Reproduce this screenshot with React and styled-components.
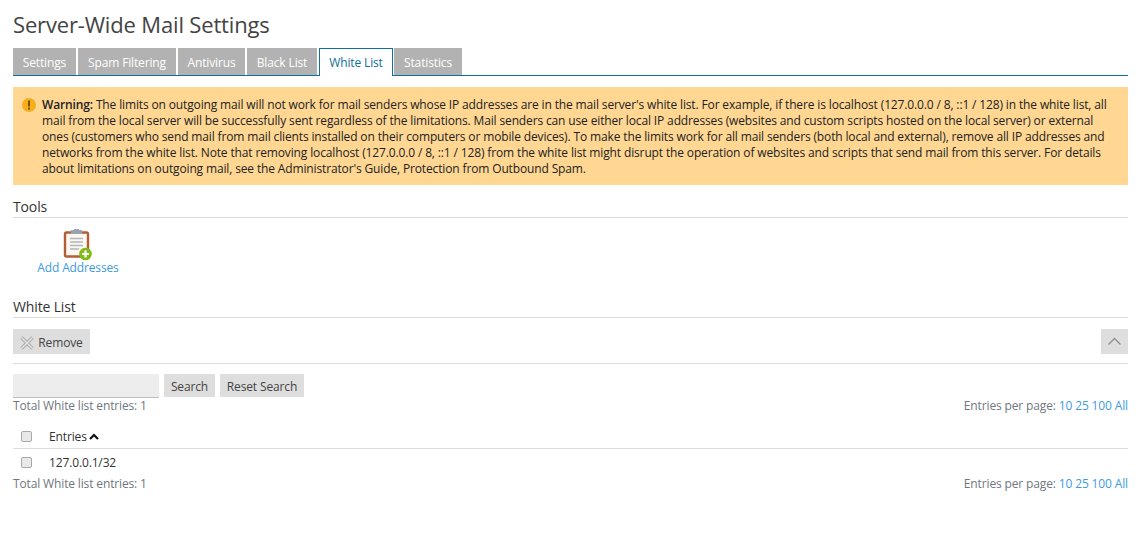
import React from "react";
import styled, { createGlobalStyle } from "styled-components";

const Global = createGlobalStyle`
  html, body { margin: 0; padding: 0; background: #fff; }
  body { font-family: "Open Sans", "Liberation Sans", sans-serif; font-size: 12px; letter-spacing: -0.14px; color: #222; }
`;
const Page = styled.div`
  padding: 0 19px 0 13px;
`;
const Title = styled.h1`
  margin: 0;
  padding-top: 9px;
  height: 48px;
  box-sizing: border-box;
  font-size: 22px;
  line-height: 30px;
  font-weight: 400;
  letter-spacing: -0.16px;
  color: #444;
`;
const Tabs = styled.div`
  display: flex;
  height: 28px;
  box-sizing: border-box;
  border-bottom: 1px solid #0f6f9c;
`;
const Tab = styled.div`
  box-sizing: border-box;
  height: ${p => (p.$active ? "28px" : "27px")};
  width: ${p => p.$w}px;
  margin-right: ${p => (p.$active ? 1 : 2)}px;
  text-align: center;
  line-height: 29px;
  white-space: nowrap;
  background: ${p => (p.$active ? "#fff" : "#b2b2b2")};
  color: ${p => (p.$active ? "#0f6f9c" : "#fff")};
  ${p => p.$active && "border: 1px solid #0f6f9c; border-bottom: none; line-height: 27px;"}
`;
const Warning = styled.div`
  margin-top: 11px;
  height: 98px;
  box-sizing: border-box;
  background: #ffd793;
  padding: 10px 10px 0 29px;
  line-height: 16px;
  color: #222;
  position: relative;
  strong { font-weight: 600; }
`;
const WarnIcon = styled.svg`
  position: absolute;
  left: 9px;
  top: 11px;
`;
const Section = styled.div`
  font-size: 14px;
  line-height: 20px;
  height: 20px;
  color: #333;
  border-bottom: 1px solid #ddd;
  margin-top: ${p => p.$mt}px;
`;
const ToolBox = styled.a`
  display: flex;
  flex-direction: column;
  align-items: center;
  width: 130px;
  margin-top: 11px;
  line-height: 16px;
  color: #3d9be0;
  svg { display: block; margin: 0 3px -1px 0; }
`;
const ActionBar = styled.div`
  display: flex;
  justify-content: space-between;
  margin-top: 11px;
  height: 34px;
  border-bottom: 1px solid #ddd;
`;
const Grey = styled.button`
  font: inherit;
  letter-spacing: inherit;
  border: 0;
  background: #dedede;
  color: #444;
  height: ${p => p.$h || 25}px;
  width: ${p => p.$w}px;
  padding: ${p => p.$pt ?? 2}px 0 0;
  display: flex;
  align-items: center;
  justify-content: center;
  gap: 4px;
  white-space: nowrap;
`;
const SearchRow = styled.div`
  display: flex;
  margin-top: 10px;
  gap: 5px;
`;
const SearchInput = styled.div`
  width: 146px;
  height: 23px;
  background: #ededed;
  border-bottom: 1px solid #b9c0c6;
`;
const Meta = styled.div`
  display: flex;
  justify-content: space-between;
  color: #6f7780;
  line-height: 16px;
`;
const Links = styled.span`
  color: #3d9be0;
`;
const Row = styled.div`
  display: flex;
  align-items: center;
  height: ${p => p.$h}px;
  padding-top: ${p => p.$pt || 0}px;
  padding-left: 8px;
  color: #333;
  ${p => p.$line && "border-bottom: 1px solid #ddd;"}
`;
const Check = styled.span`
  width: 11px;
  height: 11px;
  box-sizing: border-box;
  border: 1px solid #a8a8a8;
  border-radius: 2px;
  background: #e9e9e9;
  margin-right: 17px;
`;
const Caret = styled.svg`
  margin-left: 2px;
`;

const PerPage = () => (
  <span>Entries per page: <Links>10 25 100 All</Links></span>
);

export default function App() {
  return (
    <Page>
      <Global />
      <Title>Server-Wide Mail Settings</Title>
      <Tabs>
        <Tab $w={63}>Settings</Tab>
        <Tab $w={98}>Spam Filtering</Tab>
        <Tab $w={67}>Antivirus</Tab>
        <Tab $w={70}>Black List</Tab>
        <Tab $w={74} $active>White List</Tab>
        <Tab $w={68}>Statistics</Tab>
      </Tabs>
      <Warning>
        <WarnIcon width="14" height="14" viewBox="0 0 14 14">
          <circle cx="7" cy="7" r="7" fill="#f6ae1c" />
          <rect x="6" y="2.5" width="2" height="6" fill="#7a5200" />
          <rect x="6" y="9.6" width="2" height="2" fill="#7a5200" />
        </WarnIcon>
        <strong>Warning:</strong> The limits on outgoing mail will not work for mail senders whose IP addresses are in the mail server's white list. For example, if there is localhost (127.0.0.0 / 8, ::1 / 128) in the white list, all mail from the local server will be successfully sent regardless of the limitations. Mail senders can use either local IP addresses (websites and custom scripts hosted on the local server) or external ones (customers who send mail from mail clients installed on their computers or mobile devices). To make the limits work for all mail senders (both local and external), remove all IP addresses and networks from the white list. Note that removing localhost (127.0.0.0 / 8, ::1 / 128) from the white list might disrupt the operation of websites and scripts that send mail from this server. For details about limitations on outgoing mail, see the Administrator's Guide, Protection from Outbound Spam.
      </Warning>
      <Section $mt={12}>Tools</Section>
      <ToolBox>
        <svg width="32" height="32" viewBox="0 0 32 32">
          <rect x="4" y="3.5" width="23" height="24" rx="1.5" fill="#fbf7f2" stroke="#b35f36" strokeWidth="2.4" />
          <rect x="10" y="1" width="11" height="4" fill="#9aa4aa" />
          <rect x="13" y="0" width="5" height="2" fill="#9aa4aa" />
          <path d="M9 9.5h13M9 13h13M9 16.5h13M9 20h9" stroke="#b3b8bb" strokeWidth="1.3" />
          <circle cx="24.5" cy="25" r="6.3" fill="#7fbc16" />
          <path d="M24.5 21.5v7M21 25h7" stroke="#fff" strokeWidth="2.2" />
        </svg>
        Add Addresses
      </ToolBox>
      <Section $mt={21}>White List</Section>
      <ActionBar>
        <Grey $w={77}>
          <svg width="14" height="14" viewBox="0 0 14 14">
            <path d="M1.5 1.5l11 11M12.5 1.5l-11 11" stroke="#a9a9a9" strokeWidth="3.2" />
            <path d="M1.5 1.5l11 11M12.5 1.5l-11 11" stroke="#e6e6e6" strokeWidth="1.4" />
          </svg>
          Remove
        </Grey>
        <Grey $w={27} $pt={0}>
          <svg width="15" height="9" viewBox="0 0 15 9">
            <path d="M1.5 7.5L7.5 1.5l6 6" fill="none" stroke="#8f8f8f" strokeWidth="1.3" />
          </svg>
        </Grey>
      </ActionBar>
      <SearchRow>
        <SearchInput />
        <Grey $h={23} $w={51}>Search</Grey>
        <Grey $h={23} $w={84}>Reset Search</Grey>
      </SearchRow>
      <Meta>
        <span>Total White list entries: 1</span>
        <PerPage />
      </Meta>
      <Row $h={24} $pt={10} $line>
        <Check />
        Entries
        <Caret width="10" height="7" viewBox="0 0 10 7">
          <path d="M1 6l4-4 4 4" fill="none" stroke="#111" strokeWidth="2.2" />
        </Caret>
      </Row>
      <Row $h={27}>
        <Check />
        127.0.0.1/32
      </Row>
      <Meta>
        <span>Total White list entries: 1</span>
        <PerPage />
      </Meta>
    </Page>
  );
}
